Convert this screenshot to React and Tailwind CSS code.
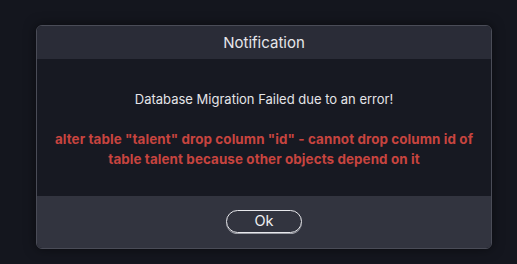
import React from 'react';

const App = () => {
  return (
    <div
      className="w-[517px] h-[264px] bg-[#14161e] pt-[25px] pl-[36px]"
      style={{ fontFamily: 'Inter, "Open Sans", sans-serif' }}
    >
      <div className="w-[456px] border border-[#4a4c57] rounded-[6px] overflow-hidden shadow-[0_0_12px_rgba(0,0,0,0.5)]">
        <div className="h-[33px] bg-[#2a2c37] flex items-center justify-center">
          <h2 className="text-[15px] text-[#e6e6ea] leading-none">Notification</h2>
        </div>

        <div className="h-[137px] bg-[#171922] flex flex-col items-center text-center pt-[31px]">
          <p className="text-[13px] text-[#e4e4e8] leading-[18px]">
            Database Migration Failed due to an error!
          </p>
          <p className="mt-[21px] text-[13.4px] font-bold text-[#c7443f] leading-[20px] tracking-[0.1px]">
            alter table "talent" drop column "id" - cannot drop column id of
            <br />
            table talent because other objects depend on it
          </p>
        </div>

        <div className="h-[52px] bg-[#32343f] flex items-center justify-center pb-[2px]">
          <button
            type="button"
            className="w-[76px] h-[23px] rounded-full border-[1.5px] border-[#e8e8ec] text-[14.5px] text-[#f0f0f2] leading-none shadow-[0_1px_0_#9a9ca4]"
          >
            Ok
          </button>
        </div>
      </div>
    </div>
  );
};

export default App;
